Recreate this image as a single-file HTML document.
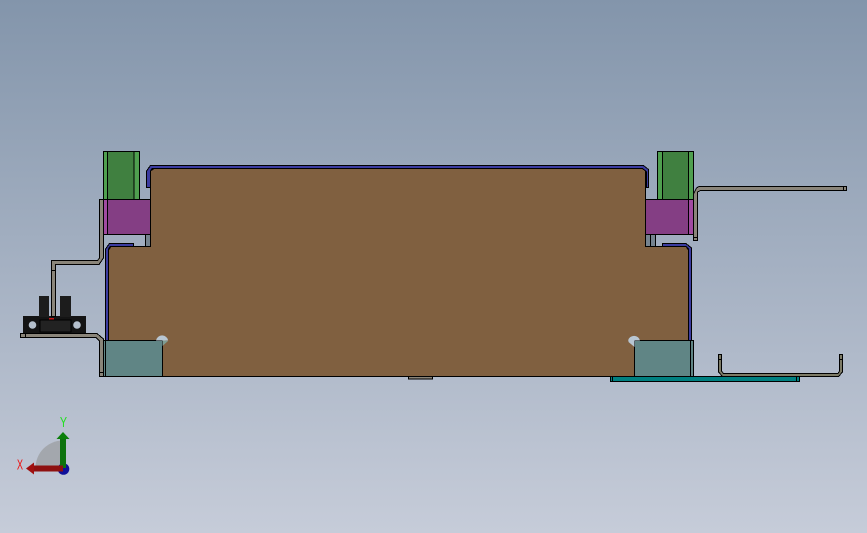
<!DOCTYPE html>
<html>
<head>
<meta charset="utf-8">
<style>
html,body{margin:0;padding:0;width:867px;height:533px;overflow:hidden;background:linear-gradient(180deg,#8395ab 0%,#c6ccd9 100%);}
svg{position:absolute;left:0;top:0;display:block;}
</style>
</head>
<body>
<svg width="867" height="533" viewBox="0 0 867 533" xmlns="http://www.w3.org/2000/svg">
<g stroke="#000" stroke-width="1" stroke-linejoin="miter" shape-rendering="crispEdges">
  <!-- green left -->
  <rect x="103.5" y="151.5" width="36" height="48" fill="#4f9f4f"/>
  <rect x="107.5" y="151.5" width="26.5" height="48" fill="#408040"/>
  <!-- green right -->
  <rect x="657.5" y="151.5" width="36" height="48" fill="#4f9f4f"/>
  <rect x="662.5" y="151.5" width="26" height="48" fill="#408040"/>
  <!-- purple left -->
  <rect x="103.5" y="199.500" width="47" height="35" fill="#a04aa0"/>
  <rect x="107.5" y="199.500" width="43" height="35" fill="#843e84"/>
  <!-- purple right -->
  <rect x="645.5" y="199.500" width="48" height="35" fill="#a04aa0"/>
  <rect x="645.5" y="199.500" width="43" height="35" fill="#843e84"/>
  <!-- small grey -->
  <rect x="145.5" y="234.500" width="5" height="12" fill="#75838f"/>
  <rect x="645.5" y="234.500" width="5" height="12" fill="#75838f"/>
  <rect x="650.5" y="234.500" width="5" height="12" fill="#75838f"/>
  <!-- grey sheet left -->
  <path d="M99.500 199.500H103.500V258L99 264.500H55.500V325H51.500V260.500H97.500L99.500 258Z" fill="#8a857a"/>
  <path d="M20.500 333.500H97L103.500 339V376.500H99.500V341L96 337.500H20.500Z" fill="#8a857a"/>
  <path d="M25.500 333.500V337.500M99.500 372.500H103.500" fill="none"/>
  <!-- grey sheet right -->
  <path d="M693.500 194V240.500H697.500V192L700.500 190.500H846.500V186.500H699L696.500 188Z" fill="#8a857a"/>
  <path d="M843.500 186.500V190.500M693.500 237.500H697.500" fill="none"/>
  <!-- blue top -->
  <path d="M146.500 187.500V171L150.500 165.500H643.500L648.500 169.500V187.500H646.500V172L642 168.500H152L150.500 171V187.500Z" fill="#3c3ca0"/>
  <!-- blue lower left -->
  <path d="M105.500 340.500V249L109.500 243.500H133.500V246.500H110L108.500 249V340.500Z" fill="#3c3ca0"/>
  <!-- blue lower right -->
  <path d="M662.500 243.500H686L691.500 248V340.500H688.500V249L686 246.500H662.500Z" fill="#3c3ca0"/>
  <!-- main body -->
  <path d="M154 168.500H642.500L645.500 171V246.500H686L688.500 250V340.500L691 376.500H108.500V250L111 246.500H150.500V171Z" fill="#806040"/>
  <!-- teal grey blocks -->
  <rect x="103.500" y="340.500" width="59" height="36" fill="#608585"/>
  <path d="M105.500 340.500V376.500" fill="none"/>
  <rect x="634.500" y="340.500" width="59" height="36" fill="#608585"/>
  <path d="M690.500 340.500V376.500" fill="none"/>
  <!-- bottom nub -->
  <rect x="408.500" y="376.500" width="24" height="2.500" fill="#8a857a"/>
  <!-- teal strip -->
  <rect x="610.500" y="376.500" width="189" height="5" fill="#008080"/>
  <path d="M612.500 376.500V381.500M796.500 376.500V381.500" fill="none"/>
  <!-- U bracket -->
  <path d="M718.500 354.500H721.500V371L723.500 373.500H838L839.500 371V354.500H842.500V372L838.500 376.500H722.500L718.500 372Z" fill="#7d7b66"/>
  <path d="M718.500 359.500H721.500M839.500 359.500H842.500" fill="none"/>
</g>
<!-- holes (half hidden behind blocks) -->
<path d="M156 340.500A6.200 6.200 0 0 1 168.200 340.500Z" fill="#b8c6d2"/>
<path d="M162.500 346L168 341L164.500 340.500H162.500Z" fill="#7f9d93"/>
<path d="M628 340.500A6.200 6.200 0 0 1 640 340.500Z" fill="#b8c6d2"/>
<path d="M634.500 347L628.500 342V340.500H634.500Z" fill="#b8c6d2"/>
<!-- sensor component -->
<g shape-rendering="crispEdges">
  <rect x="23" y="316" width="63" height="17" fill="#141414"/>
  <rect x="39" y="296" width="10" height="21" fill="#1c1c1c"/>
  <rect x="60" y="296" width="11" height="21" fill="#1c1c1c"/>
  <rect x="51.500" y="270.500" width="4" height="46" fill="#8a857a" stroke="#000" stroke-width="1"/>
  <rect x="49" y="318" width="5" height="1.500" fill="#c01818"/>
  <rect x="40" y="320" width="31" height="12" fill="#222" stroke="#000" stroke-width="1"/>
</g>
<circle cx="32.500" cy="325" r="3.800" fill="#b4bfcc"/>
<circle cx="77" cy="325" r="3.800" fill="#b4bfcc"/>
<!-- triad -->
<path d="M63 468H35.500A27.500 27.500 0 0 1 63 440.500Z" fill="#a3a7ad"/>
<circle cx="63.500" cy="469" r="5.800" fill="#10109a"/>
<rect x="60" y="439" width="6" height="29" fill="#0d730d"/>
<path d="M63 432L69.500 439H56.500Z" fill="#0b7f0b"/>
<rect x="33" y="465.500" width="30" height="6" fill="#8e1010"/>
<path d="M26 468.500L34 462.500V474.500Z" fill="#a01010"/>
<text transform="translate(63.500 427) scale(.72 1)" font-family="'Liberation Sans',sans-serif" font-size="15" fill="#20e020" text-anchor="middle">Y</text>
<text transform="translate(20 469.500) scale(.62 1)" font-family="'Liberation Sans',sans-serif" font-size="15" fill="#ee1010" text-anchor="middle">X</text>
</svg>
</body>
</html>
